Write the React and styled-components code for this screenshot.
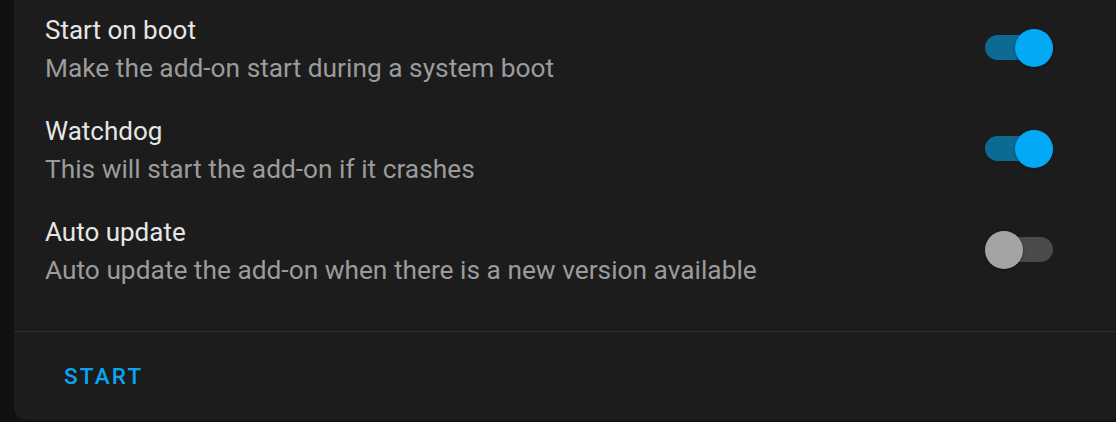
import styled, { createGlobalStyle } from 'styled-components';

const GlobalStyle = createGlobalStyle`
  html, body {
    margin: 0;
    padding: 0;
    background-color: #111111;
    overflow: hidden;
  }

  body {
    font-family: Roboto, "Noto Sans", sans-serif;
    -webkit-font-smoothing: antialiased;
  }
`;

const Card = styled('div')`
  background-color: #1c1c1c;
  border-radius: 12px;
  margin: -24px 0 0 14px;
  width: 1130px;
`;

const Settings = styled('div')`
  display: flex;
  flex-direction: column;
  gap: 25px;
  padding: 35px 91px 42px 31px;
`;

const Row = styled('div')`
  align-items: center;
  display: flex;
  justify-content: space-between;
`;

const Text = styled('div')`
  display: flex;
  flex-direction: column;
`;

const Title = styled('div')`
  color: #e6e6e6;
  font-size: 26px;
  line-height: 38px;
`;

const Description = styled('div')`
  color: #9b9b9b;
  font-size: 26.3px;
  line-height: 38px;
`;

const Switch = styled('div')`
  align-items: center;
  display: flex;
  height: 38px;
  justify-content: ${({ $on }) => ($on ? 'flex-end' : 'flex-start')};
  margin-bottom: 2px;
  position: relative;
  width: 68px;
`;

const Track = styled('div')`
  background-color: ${({ $on }) => ($on ? '#0d6a92' : '#4a4a4a')};
  border-radius: 13px;
  height: 25px;
  left: 0;
  position: absolute;
  right: 0;
  top: 6px;
`;

const Thumb = styled('div')`
  background-color: ${({ $on }) => ($on ? '#03a9f4' : '#a4a4a4')};
  border-radius: 50%;
  box-shadow: 0 1px 3px rgba(0, 0, 0, 0.35);
  height: 38px;
  position: relative;
  width: 38px;
`;

const Divider = styled('div')`
  background-color: #2f2f2f;
  height: 1px;
`;

const Footer = styled('div')`
  align-items: center;
  display: flex;
  height: 88px;
  padding-left: 50px;
`;

const Button = styled('button')`
  background: none;
  border: none;
  color: #09a5ef;
  cursor: pointer;
  font-family: Roboto, "Noto Sans", sans-serif;
  font-size: 22.5px;
  font-weight: 500;
  letter-spacing: 2.2px;
  padding: 0;
  text-transform: uppercase;
`;

const options = [
  { title: 'Start on boot', description: 'Make the add-on start during a system boot', on: true },
  { title: 'Watchdog', description: 'This will start the add-on if it crashes', on: true },
  { title: 'Auto update', description: 'Auto update the add-on when there is a new version available', on: false },
];

const Toggle = ({ on }) => (
  <Switch $on={on}>
    <Track $on={on} />
    <Thumb $on={on} />
  </Switch>
);

export default function App() {
  return (
    <>
      <GlobalStyle />
      <Card>
        <Settings>
          {options.map(({ title, description, on }) => (
            <Row key={title}>
              <Text>
                <Title>{title}</Title>
                <Description>{description}</Description>
              </Text>
              <Toggle on={on} />
            </Row>
          ))}
        </Settings>
        <Divider />
        <Footer>
          <Button>Start</Button>
        </Footer>
      </Card>
    </>
  );
}
